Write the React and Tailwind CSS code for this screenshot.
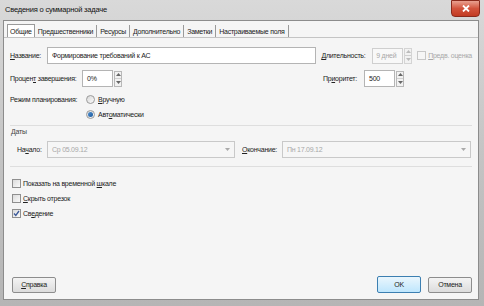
import { useState } from 'react';

function Spinner({ disabled }) {
  return (
    <div className={`flex flex-col w-[8px] h-[16px] ml-[1px] border ${disabled ? 'border-[#d4d4d4]' : 'border-[#b8b8b8]'} bg-[#f2f2f2]`}>
      <div className="flex-1 flex items-center justify-center border-b border-[#d0d0d0]">
        <svg width="5" height="3" viewBox="0 0 5 3"><path d="M0 3 L2.5 0 L5 3 Z" fill={disabled ? '#bbb' : '#666'} /></svg>
      </div>
      <div className="flex-1 flex items-center justify-center">
        <svg width="5" height="3" viewBox="0 0 5 3"><path d="M0 0 L2.5 3 L5 0 Z" fill={disabled ? '#bbb' : '#666'} /></svg>
      </div>
    </div>
  );
}

function Check({ checked, label }) {
  return (
    <div className="flex items-center h-[15px]">
      <div className="w-[9px] h-[9px] border border-[#8f8f8f] bg-gradient-to-br from-[#dcdcdc] to-[#fafafa] flex items-center justify-center">
        {checked && (
          <svg width="7" height="7" viewBox="0 0 7 7"><path d="M1 3.5 L2.8 5.5 L6 1" stroke="#3c5a9a" strokeWidth="1.3" fill="none" /></svg>
        )}
      </div>
      <span className="ml-[2px] text-[#222]">{label}</span>
    </div>
  );
}

function Radio({ checked, label }) {
  return (
    <div className="flex items-center h-[15px]">
      <div className="w-[9px] h-[9px] rounded-full border border-[#9a9a9a] bg-gradient-to-br from-[#d8d8d8] to-[#fbfbfb] flex items-center justify-center">
        {checked && <div className="w-[5px] h-[5px] rounded-full bg-gradient-to-br from-[#4e8fd0] to-[#1c5a9c]" />}
      </div>
      <span className="ml-[3px] text-[#222]">{label}</span>
    </div>
  );
}

function Combo({ value, width }) {
  return (
    <div className={`${width} h-[17px] border border-[#c9c9c9] bg-[#f6f6f6] flex items-center justify-between px-[4px]`}>
      <span className="text-[#a8a8a8]">{value}</span>
      <svg width="5" height="3" viewBox="0 0 5 3"><path d="M0 0 L2.5 3 L5 0 Z" fill="#aaa" /></svg>
    </div>
  );
}

export default function App() {
  const [tab] = useState(0);
  const tabs = ['Общие', 'Предшественники', 'Ресурсы', 'Дополнительно', 'Заметки', 'Настраиваемые поля'];

  return (
    <div className="w-[484px] h-[306px] flex flex-col bg-gradient-to-b from-[#d9d9d9] via-[#c4c4c4] to-[#b5b5b5] font-['Liberation_Sans',Arial,sans-serif] text-[7px] tracking-[-0.25px] leading-none text-[#222] whitespace-nowrap overflow-hidden">
      {/* title bar */}
      <div className="h-[20px] flex items-start justify-between">
        <span className="ml-[5px] mt-[6px] text-[7.5px] tracking-[-0.2px] text-[#111]">Сведения о суммарной задаче</span>
        <div className="mr-[4px] w-[29px] h-[17px] rounded-b-[4px] border border-[#8a2a1c] bg-gradient-to-b from-[#e8a090] via-[#d2533c] to-[#c23a22] flex items-center justify-center">
          <svg width="8" height="7" viewBox="0 0 8 7"><path d="M1 0.5 L7 6.5 M7 0.5 L1 6.5" stroke="#fff" strokeWidth="1.8" /></svg>
        </div>
      </div>

      {/* client area */}
      <div className="flex-1 ml-[3px] mr-[5px] mb-[6px] border border-[#8c8c8c] bg-[#f5f5f5] flex flex-col">
        {/* tabs */}
        <div className="flex items-end h-[17px] px-[3px] border-b border-[#c4c4c4]">
          {tabs.map((t, i) => (
            <div
              key={t}
              className={
                i === tab
                  ? 'h-[13px] px-[2px] flex items-center border border-b-0 border-[#9a9a9a] bg-white'
                  : 'h-[12px] px-[3px] flex items-center border-r border-[#9a9a9a]'
              }
            >
              {t}
            </div>
          ))}
        </div>

        {/* panel */}
        <div className="flex-1 flex flex-col px-[6px]">
          <div className="flex items-center h-[17px] mt-[9px]">
            <span className="w-[37px]"><u>Н</u>азвание:</span>
            <div className="w-[270px] h-[17px] border border-[#b4b4b4] bg-white flex items-center px-[4px]">Формирование требований к АС</div>
            <span className="ml-[5px] w-[51px]"><u>Д</u>лительность:</span>
            <div className="w-[31px] h-[16px] border border-[#cfcfcf] bg-[#f8f8f8] flex items-center px-[3px] text-[#a8a8a8]">9 дней</div>
            <Spinner disabled />
            <div className="ml-[5px] w-[9px] h-[9px] border border-[#c8c8c8] bg-[#f6f6f6]" />
            <span className="ml-[2px] text-[#a8a8a8]"><u>П</u>редв. оценка</span>
          </div>

          <div className="flex items-center h-[17px] mt-[6px]">
            <span className="w-[72px]">Процен<u>т</u> завершения:</span>
            <div className="w-[31px] h-[17px] border border-[#b4b4b4] bg-white flex items-center px-[4px]">0%</div>
            <Spinner />
            <span className="ml-[201px] w-[41px]">Пр<u>и</u>оритет:</span>
            <div className="w-[31px] h-[17px] border border-[#b4b4b4] bg-white flex items-center px-[4px]">500</div>
            <Spinner />
          </div>

          <div className="flex items-center h-[15px] mt-[5px]">
            <span className="w-[76px]">Режим планирования:</span>
            <Radio label={<><u>В</u>ручную</>} />
          </div>
          <div className="flex items-center h-[15px] ml-[76px]">
            <Radio checked label={<>Авт<u>о</u>матически</>} />
          </div>

          <div className="mt-[3px] border-t border-[#dedede] pt-[2px] pl-[1px] text-[#444]">Даты</div>

          <div className="flex items-center h-[17px] mt-[6px] pl-[7px]">
            <span className="w-[30px]">На<u>ч</u>ало:</span>
            <Combo value="Ср 05.09.12" width="w-[188px]" />
            <span className="ml-[7px] w-[40px]"><u>О</u>кончание:</span>
            <Combo value="Пн 17.09.12" width="w-[189px]" />
          </div>

          <div className="mt-[8px] border-t border-[#dedede]" />

          <div className="flex flex-col mt-[9px] ml-[2px]">
            <Check label={<>Показать на временной <u>ш</u>кале</>} />
            <Check label={<><u>С</u>крыть отрезок</>} />
            <Check checked label={<>Св<u>е</u>дение</>} />
          </div>

          <div className="flex-1" />

          <div className="flex items-center h-[17px] mb-[6px] ml-[2px]">
            <div className="w-[44px] h-[16px] border border-[#8d8d8d] rounded-[2px] bg-gradient-to-b from-[#f4f4f4] to-[#dcdcdc] flex items-center justify-center"><u>С</u>правка</div>
            <div className="flex-1" />
            <div className="w-[44px] h-[17px] border border-[#3c7fb1] rounded-[2px] bg-gradient-to-b from-[#eaf6fd] to-[#bee6fd] flex items-center justify-center">OK</div>
            <div className="ml-[7px] w-[44px] h-[16px] border border-[#8d8d8d] rounded-[2px] bg-gradient-to-b from-[#f4f4f4] to-[#dcdcdc] flex items-center justify-center">Отмена</div>
          </div>
        </div>
      </div>
    </div>
  );
}
